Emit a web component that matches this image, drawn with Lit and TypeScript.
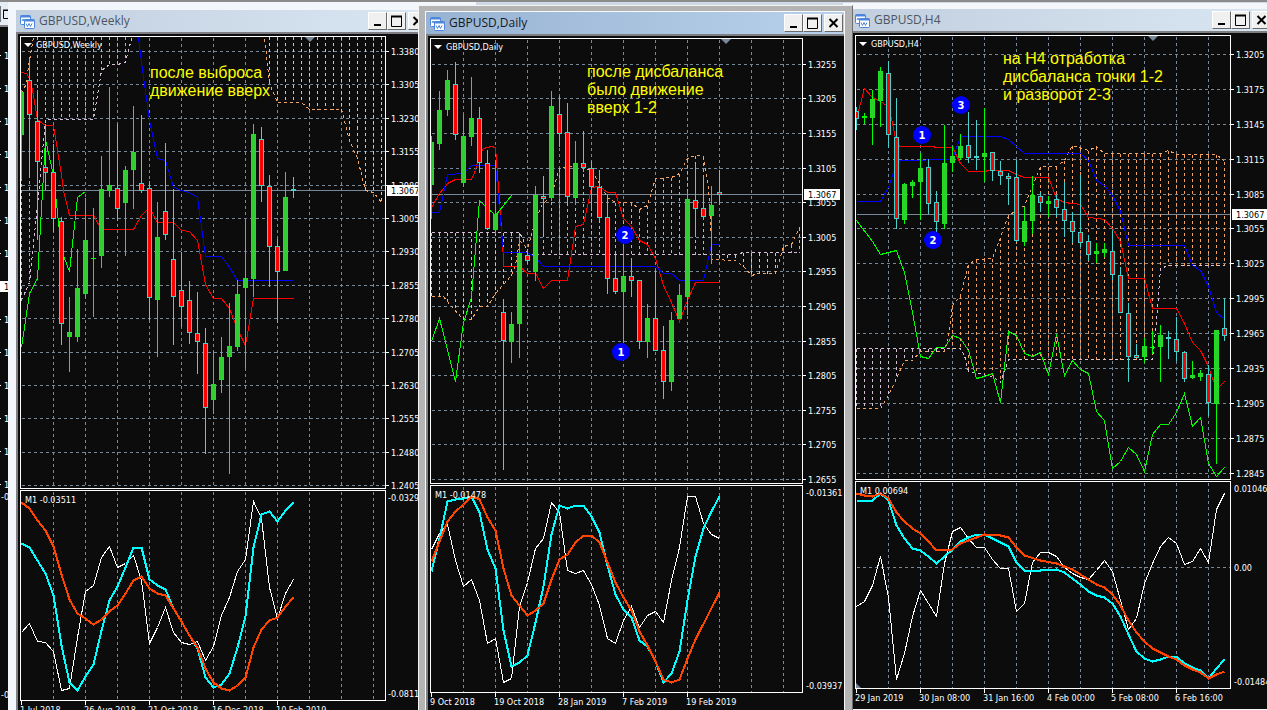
import { LitElement, html, svg, css, nothing } from "lit";
import { customElement, property } from "lit/decorators.js";

type Candle = [kind: "g" | "r", top: number, bottom: number, high: number, low: number];
type Label = [y: number, text: string];

interface Chart {
  title: string;
  active: boolean;
  place: string;
  originX: number;
  originY: number;
  box: { left: number; right: number; top: number; bottom: number; subTop: number; subBottom: number };
  caption: { x: number; y: number };
  first: number;
  gridX: number;
  axisX: number;
  prices: Label[];
  price: number;
  subLabels: Label[];
  subAxisX: number;
  zero?: number;
  momentum: { x: number; y: number; text: string };
  dates: string[];
  dateX: number;
  dateY: number;
  marker: number;
  candles: Candle[];
  red: string;
  blue: string;
  green: string;
  spanA: string;
  spanB: string;
  white: string;
  cyan: string;
  orange: string;
  note: { x: number; y: number; lines: string[] };
  pins: [number, number, string][];
}

const scale = (ys: number[], start: number, step: number): Label[] =>
  ys.map((y, i) => [y, ((start - i * step) / 10000).toFixed(4)]);

const weekly: Chart = {
  title: "GBPUSD,Weekly",
  active: false,
  place: "left:8px;top:3px;width:431px;padding:7px 8px 0",
  originX: 18,
  originY: 34,
  box: { left: 20, right: 385, top: 36, bottom: 488, subTop: 490, subBottom: 700 },
  caption: { x: 36, y: 48 },
  first: 21,
  gridX: 53,
  axisX: 391,
  prices: scale([51, 84, 118, 151, 185, 218, 251, 285, 318, 352, 385, 418, 452, 485], 13380, 75),
  price: 190,
  subLabels: [[501, "-0.0329"], [697, "-0.0811"]],
  subAxisX: 388,
  momentum: { x: 25, y: 503, text: "M1 -0.03511" },
  dates: ["1 Jul 2018", "26 Aug 2018", "21 Oct 2018", "16 Dec 2018", "10 Feb 2019"],
  dateX: 20,
  dateY: 713,
  marker: 310,
  candles: [
    ["g", 92, 135, 90, 179], ["r", 80, 115, 58, 177], ["r", 121, 162, 90, 240], ["r", 167, 173, 124, 190],
    ["r", 172, 219, 144, 232], ["r", 221, 324, 217, 345], ["g", 332, 337, 297, 372], ["g", 288, 337, 249, 342],
    ["g", 240, 294, 198, 298], ["g", 258, 259, 208, 317], ["g", 189, 256, 156, 268], ["g", 185, 191, 87, 197],
    ["r", 188, 209, 124, 221], ["g", 170, 203, 166, 256], ["g", 152, 170, 106, 209], ["r", 183, 191, 115, 193],
    ["r", 188, 298, 181, 320], ["g", 237, 300, 202, 357], ["r", 211, 235, 143, 240], ["r", 259, 297, 189, 345],
    ["r", 290, 307, 252, 327], ["r", 300, 333, 281, 344], ["r", 333, 342, 292, 374], ["r", 343, 408, 328, 454],
    ["g", 384, 400, 351, 414], ["g", 357, 380, 337, 393], ["g", 346, 357, 303, 474], ["g", 294, 347, 280, 351],
    ["g", 278, 288, 220, 368], ["g", 134, 279, 124, 297], ["r", 139, 186, 127, 202], ["r", 186, 247, 175, 287],
    ["r", 246, 272, 239, 323], ["g", 197, 271, 172, 271], ["r", 189, 191, 177, 198],
  ],
  red: "21,72 26,73 29,78 32,90 37,119 42,123 45,125 53,125 61,175 63,190 69,215 93,215 101,229 133,229 141,215 149,207 157,222 173,222 181,230 189,231 197,240 205,284 213,298 221,298 229,308 237,329 245,345 253,298 293,298",
  blue: "138,37 141,62 149,120 157,158 165,160 173,187 181,190 189,192 197,197 205,256 221,256 229,267 237,280 293,280",
  green: "21,347 29,293 37,278 45,139 53,175 61,250 69,271 77,197 85,191",
  spanA: "21,93 25,85 29,60 33,37 37,20 261,20 264,37 269,83 277,102 301,102 309,109 341,109 349,140 357,158 365,190 373,192 381,202",
  spanB: "21,300 29,282 37,205 45,119 93,119 101,70 109,64 117,64 125,62 131,38 137,20 381,20",
  white: "21,632 29,623 37,641 45,642 53,651 61,690 69,688 77,637 85,591 93,585 101,557 109,546 117,567 125,563 133,555 141,580 149,643 157,627 165,607 173,632 181,642 189,644 197,641 205,660 213,646 221,615 229,597 237,571 245,559 253,501 261,518 269,587 277,618 285,593 293,579",
  cyan: "21,543 29,547 37,560 45,573 53,595 61,645 69,682 77,690 85,676 93,664 101,630 109,600 117,586 125,567 133,547 141,547 149,579 157,585 165,589 173,608 181,621 189,635 197,648 205,677 213,687 221,684 229,673 237,647 245,616 253,547 261,514 269,511 277,521 285,510 293,502",
  orange: "21,502 29,508 37,520 45,530 53,546 61,574 69,599 77,613 85,618 93,624 101,619 109,611 117,605 125,593 133,580 141,576 149,588 157,593 165,595 173,608 181,621 189,635 197,647 205,668 213,682 221,688 229,690 237,685 245,677 253,647 261,629 269,620 277,617 285,606 293,597",
  note: { x: 150, y: 78, lines: ["после выброса", "движение вверх"] },
  pins: [],
};

const daily: Chart = {
  title: "GBPUSD,Daily",
  active: true,
  place: "left:418px;top:5px;width:435px;padding:5px 7px 0 6px",
  originX: 428,
  originY: 36,
  box: { left: 430, right: 802, top: 38, bottom: 483, subTop: 485, subBottom: 692 },
  caption: { x: 446, y: 50 },
  first: 431,
  gridX: 463,
  axisX: 808,
  prices: scale([64, 98, 133, 168, 202, 237, 271, 306, 341, 375, 410, 444, 479], 13255, 50),
  price: 194,
  subLabels: [[496, "-0.01361"], [689, "-0.03937"]],
  subAxisX: 806,
  momentum: { x: 435, y: 498, text: "M1 -0.01478" },
  dates: ["9 Oct 2018", "19 Oct 2018", "28 Jan 2019", "7 Feb 2019", "19 Feb 2019"],
  dateX: 430,
  dateY: 705,
  marker: 726,
  candles: [
    ["g", 142, 185, 136, 219], ["g", 110, 144, 91, 150], ["g", 80, 110, 70, 116], ["r", 84, 135, 62, 140],
    ["g", 136, 183, 115, 187], ["g", 118, 137, 77, 146], ["r", 118, 163, 107, 173], ["r", 163, 229, 150, 230],
    ["g", 214, 230, 162, 234], ["r", 312, 341, 299, 470], ["g", 324, 342, 312, 363], ["g", 253, 324, 235, 358],
    ["r", 255, 261, 250, 264], ["g", 195, 272, 186, 281], ["r", 196, 199, 176, 234], ["g", 106, 198, 91, 201],
    ["r", 114, 134, 96, 147], ["r", 132, 197, 103, 203], ["g", 163, 198, 141, 205], ["r", 163, 168, 131, 172],
    ["r", 168, 187, 161, 211], ["r", 187, 218, 170, 221], ["r", 217, 279, 195, 294], ["r", 278, 292, 255, 294],
    ["g", 276, 292, 244, 343], ["r", 276, 281, 258, 297], ["r", 280, 342, 280, 349], ["g", 318, 342, 304, 358],
    ["r", 318, 351, 270, 351], ["r", 350, 382, 326, 399], ["g", 320, 382, 312, 391], ["g", 295, 319, 284, 319],
    ["g", 199, 297, 191, 315], ["r", 200, 209, 165, 236], ["r", 208, 217, 176, 220], ["g", 205, 216, 186, 264],
    ["r", 192, 195, 170, 205],
  ],
  red: "431,207 439,193 447,183 455,179 471,179 475,170 479,153 483,148 491,146 495,147 499,200 503,258 503,266 519,266 527,273 535,273 543,288 551,280 567,280 573,240 575,226 583,224 591,187 599,186 607,192 615,192 623,218 631,226 639,240 647,244 655,258 663,285 671,302 679,321 687,300 695,282 719,282",
  blue: "431,212 439,212 447,174 463,173 471,165 495,165 503,252 527,252 535,257 543,266 655,266 663,273 671,273 679,280 703,280 711,244 719,244",
  green: "431,341 439,318 455,381 463,322 471,297 479,200 495,215 511,195",
  spanA: "431,296 443,296 451,306 463,319 471,319 479,306 487,306 495,293 503,284 511,275 515,265 519,240 527,248 535,220 541,205 551,195 559,168 575,165 591,170 607,197 615,202 631,202 639,209 647,205 655,178 671,177 679,173 687,158 695,155 703,156 708,185 711,240 711,259 735,260 743,266 751,275 759,273 775,273 783,246 791,244 799,227",
  spanB: "431,232 519,232 523,240 527,254 735,254 743,252 799,252",
  white: "431,549 439,533 447,524 455,560 463,586 471,579 479,600 487,643 495,638 503,682 511,678 519,606 527,582 535,548 543,538 551,502 559,512 567,570 575,573 583,570 591,584 599,605 607,638 615,643 623,620 631,606 639,627 647,615 655,611 663,622 671,580 679,547 687,496 695,496 703,523 711,534 719,538",
  cyan: "431,571 439,538 447,501 455,499 463,498 471,496 479,512 487,549 495,568 503,630 511,666 519,662 527,655 535,622 543,586 551,534 559,505 567,508 575,505 583,505 591,516 599,532 607,565 615,594 623,609 631,617 639,640 647,646 655,661 663,682 671,673 679,651 687,600 695,556 703,528 711,511 719,496",
  orange: "431,561 439,541 447,521 455,511 463,504 471,496 479,499 487,517 495,530 503,568 511,595 519,605 527,615 535,610 543,603 551,579 559,559 567,554 575,542 583,535 591,535 599,542 607,562 615,582 623,597 631,610 639,631 647,645 655,661 663,679 671,682 679,679 687,658 695,639 719,592",
  note: { x: 587, y: 77, lines: ["после дисбаланса", "было движение", "вверх 1-2"] },
  pins: [[625, 235, "2"], [621, 352, "1"]],
};

const h4: Chart = {
  title: "GBPUSD,H4",
  active: false,
  place: "left:843px;top:3px;width:432px;padding:6px 0 1px 8px",
  originX: 853,
  originY: 33,
  box: { left: 855, right: 1230, top: 35, bottom: 479, subTop: 481, subBottom: 688 },
  caption: { x: 871, y: 47 },
  first: 856,
  gridX: 888,
  axisX: 1236,
  prices: scale([54, 89, 124, 159, 194, 228, 263, 298, 333, 368, 403, 438, 473], 13205, 30),
  price: 214,
  subLabels: [[492, "0.01046"], [571, "0.00"], [685, "-0.01484"]],
  subAxisX: 1234,
  zero: 567,
  momentum: { x: 860, y: 494, text: "M1 0.00694" },
  dates: ["29 Jan 2019", "30 Jan 08:00", "31 Jan 16:00", "4 Feb 00:00", "5 Feb 08:00", "6 Feb 16:00"],
  dateX: 855,
  dateY: 701,
  marker: 1153,
  candles: [
    ["r", 111, 119, 107, 130], ["g", 116, 118, 113, 124], ["g", 99, 118, 90, 145], ["g", 71, 101, 67, 127],
    ["r", 73, 135, 61, 148], ["r", 137, 219, 98, 229], ["g", 184, 220, 183, 224], ["g", 182, 186, 180, 198],
    ["g", 168, 182, 153, 220], ["r", 167, 204, 159, 214], ["r", 202, 222, 191, 232], ["g", 163, 224, 125, 229],
    ["g", 156, 163, 146, 172], ["g", 146, 158, 134, 160], ["r", 145, 158, 112, 163], ["r", 156, 158, 120, 170],
    ["g", 153, 157, 108, 182], ["r", 152, 171, 152, 181], ["r", 171, 176, 161, 185], ["r", 176, 179, 173, 205],
    ["r", 177, 241, 160, 242], ["g", 221, 242, 207, 246], ["g", 195, 221, 176, 234], ["r", 196, 203, 192, 212],
    ["g", 201, 204, 196, 217], ["r", 199, 208, 195, 217], ["r", 209, 221, 182, 237], ["r", 221, 232, 212, 243],
    ["r", 232, 243, 175, 247], ["r", 241, 255, 235, 261], ["g", 251, 254, 243, 263], ["g", 249, 253, 243, 257],
    ["r", 251, 275, 231, 280], ["r", 275, 313, 267, 313], ["r", 313, 357, 303, 382], ["r", 355, 358, 344, 358],
    ["g", 346, 357, 338, 363], ["g", 347, 348, 331, 354], ["g", 335, 347, 325, 382], ["r", 337, 339, 331, 359],
    ["r", 339, 352, 317, 361], ["r", 352, 379, 351, 382], ["g", 375, 378, 361, 379], ["g", 373, 377, 370, 381],
    ["r", 374, 403, 365, 416], ["g", 330, 404, 330, 464], ["r", 328, 336, 298, 341],
  ],
  red: "856,118 864,88 872,97 880,101 886,105 891,118 895,138 899,146 932,146 936,147 952,147 960,163 968,171 984,171 988,170 1008,170 1016,174 1024,177 1048,177 1056,198 1064,202 1080,204 1088,217 1104,219 1112,228 1120,241 1128,278 1144,278 1152,308 1176,308 1184,323 1192,342 1200,350 1208,366 1216,389 1224,381",
  blue: "856,201 880,201 888,187 894,169 900,160 952,159 960,136 1000,136 1008,139 1024,153 1080,153 1088,160 1096,180 1104,185 1112,195 1120,211 1128,245 1184,245 1192,265 1200,270 1208,286 1216,312 1224,319",
  green: "856,220 872,241 880,254 896,250 904,272 912,312 920,356 928,358 936,347 944,347 952,335 960,338 968,350 976,378 984,376 992,373 1000,402 1008,331 1016,335 1024,353 1032,356 1040,352 1048,374 1056,334 1064,375 1072,360 1080,369 1088,373 1096,411 1104,420 1112,468 1120,461 1128,447 1136,454 1144,471 1152,434 1160,424 1168,424 1176,412 1184,393 1192,426 1200,417 1208,463 1216,476 1224,467",
  spanA: "856,408 880,408 888,395 896,378 904,360 912,360 920,351 944,351 948,335 952,305 960,295 968,264 976,259 992,258 1000,237 1008,215 1024,205 1040,166 1056,166 1064,160 1072,145 1088,150 1096,146 1104,153 1160,153 1168,150 1176,154 1216,154 1224,161",
  spanB: "856,348 960,348 964,355 968,371 992,376 1000,382 1008,359 1152,359 1156,320 1160,268 1168,265 1224,265",
  white: "856,606 864,601 872,585 880,556 888,597 896,679 904,653 912,616 920,590 928,603 936,616 944,563 952,531 960,527 968,538 976,547 984,547 992,559 1000,568 1008,568 1016,611 1024,603 1032,562 1040,552 1048,552 1056,556 1064,567 1072,573 1080,577 1088,579 1096,570 1104,560 1112,571 1120,600 1128,629 1136,618 1144,583 1152,563 1160,546 1168,537 1176,543 1184,564 1192,561 1200,548 1208,562 1216,509 1224,493",
  cyan: "856,500 872,500 880,493 888,500 896,525 904,538 912,548 920,550 928,556 936,563 944,556 952,549 960,541 968,537 976,534 984,534 992,538 1008,546 1016,562 1024,570 1040,570 1056,569 1064,572 1080,584 1088,591 1096,595 1104,597 1112,603 1120,616 1128,634 1136,651 1144,658 1152,661 1160,659 1168,656 1176,656 1184,663 1192,667 1200,670 1208,678 1216,668 1224,659",
  orange: "856,493 864,495 872,496 880,493 888,498 896,512 904,521 912,528 920,533 928,541 936,550 952,549 960,543 984,534 1000,535 1008,537 1016,547 1024,555 1040,560 1056,563 1072,569 1096,584 1104,587 1112,594 1120,605 1128,620 1136,632 1144,641 1152,648 1168,656 1176,659 1184,665 1192,669 1200,672 1208,678 1216,674 1224,671",
  note: { x: 1003, y: 64, lines: ["на H4 отработка", "дисбаланса точки 1-2", "и разворот 2-3"] },
  pins: [[922, 135, "1"], [933, 240, "2"], [961, 105, "3"]],
};

const parse = (points: string) => points.split(" ").map((p) => p.split(",").map(Number));

/** Height of a polyline at x, interpolated between its vertices. */
const levelAt = (points: number[][], x: number): number => {
  for (let i = 1; i < points.length; i++) {
    const [x0, y0] = points[i - 1];
    const [x1, y1] = points[i];
    if (x >= x0 && x <= x1 && x1 > x0) return y0 + ((y1 - y0) * (x - x0)) / (x1 - x0);
  }
  return points[points.length - 1][1];
};

@customElement("price-chart")
class PriceChart extends LitElement {
  @property({ attribute: false }) chart!: Chart;

  static styles = css`
    :host { display: block; flex: 1; min-height: 0; overflow: hidden; background: #0c0c0c; }
    svg { display: block; width: 100%; height: 100%; }
    text { font: 9px "DejaVu Sans Condensed", "Noto Sans", sans-serif; fill: #fff; }
    .note { font: 16px "Liberation Sans", sans-serif; fill: #ff0; }
    .pin { font: bold 10px "DejaVu Sans", sans-serif; text-anchor: middle; }
    .disc { fill: #00f; }
    .crisp { shape-rendering: crispEdges; fill: none; }
    .frame, .tick { stroke: #fff; }
    .grid { stroke: #778899; stroke-dasharray: 3 3; }
    .level { stroke: #778899; }
    .peach { stroke: #f4a460; stroke-dasharray: 3 3; }
    .thistle { stroke: #d8bfd8; stroke-dasharray: 3 3; }
    .red { stroke: #f00; }
    .blue { stroke: #00f; }
    .lime { stroke: #0f0; }
    .white { stroke: #fff; }
    .cyan { stroke: #0ff; stroke-width: 2; }
    .orange { stroke: #ff4500; stroke-width: 2; }
    .wickg { fill: #0f0; }
    .wickr { fill: #48d1cc; }
    .bodyg { fill: #32cd32; stroke: #1ee01e; }
    .bodyr { fill: #f00; stroke: #48d1cc; }
    .marker { fill: #778899; }
    .arrow, .tag { fill: #fff; }
    .now { fill: #000; }
  `;

  private cloud(c: Chart) {
    const a = parse(c.spanA);
    const b = parse(c.spanB);
    const end = a[a.length - 1][0];
    const lines = [];
    for (let x = c.first; x <= end; x += 8) {
      const ya = levelAt(a, x);
      const yb = levelAt(b, x);
      if (Math.abs(ya - yb) < 3) continue;
      lines.push(svg`<line class=${ya < yb ? "peach" : "thistle"} x1=${x} x2=${x}
        y1=${Math.max(c.box.top, Math.min(ya, yb))} y2=${Math.max(ya, yb)} />`);
    }
    return lines;
  }

  render() {
    const c = this.chart;
    const b = c.box;
    const columns = Array.from({ length: 11 }, (_, i) => c.gridX + i * 32);
    const clip = `plot-${c.first}`;
    return html`<svg role="img" aria-label=${c.title}>
      <g transform="translate(${-c.originX} ${-c.originY})">
        <clipPath id=${clip}>
          <rect x=${b.left} y=${b.top} width=${b.right - b.left} height=${b.bottom - b.top} />
        </clipPath>
        <g class="crisp" transform="translate(0.5 0.5)">
          ${columns.map((x) => svg`
            <line class="grid" x1=${x} x2=${x} y1=${b.top + 1} y2=${b.bottom} />
            <line class="grid" x1=${x} x2=${x} y1=${b.subTop + 1} y2=${b.subBottom} />`)}
          ${c.prices.map(([y]) => svg`<line class="grid" x1=${b.left + 1} x2=${b.right} y1=${y} y2=${y} />`)}
          ${c.zero ? svg`<line class="grid" x1=${b.left + 1} x2=${b.right} y1=${c.zero} y2=${c.zero} />` : nothing}
          <line class="level" x1=${b.left + 1} x2=${b.right} y1=${c.price} y2=${c.price} />
        </g>
        <g clip-path="url(#${clip})">
          <g class="crisp" transform="translate(0.5 0.5)">
            ${this.cloud(c)}
            <polyline class="thistle" points=${c.spanB} />
            <polyline class="peach" points=${c.spanA} />
            <polyline class="red" points=${c.red} />
            <polyline class="blue" points=${c.blue} />
            <polyline class="lime" points=${c.green} />
          </g>
          <g shape-rendering="crispEdges">
            ${c.candles.map(([kind, top, bottom, high, low], i) => {
              const x = c.first + i * 8;
              return svg`<rect class="wick${kind}" x=${x} y=${high} width="1" height=${low - high} />
                ${bottom - top < 3
                  ? svg`<rect class="wick${kind}" x=${x - 2} y=${top} width="5" height=${bottom - top} />`
                  : svg`<rect class="body${kind}" x=${x - 1.5} y=${top + 0.5} width="4" height=${bottom - top - 1} />`}`;
            })}
          </g>
        </g>
        <g class="crisp" transform="translate(0.5 0.5)">
          <polyline class="white" points=${c.white} />
          <polyline class="cyan" points=${c.cyan} />
          <polyline class="orange" points=${c.orange} />
          <rect class="frame" x=${b.left} y=${b.top} width=${b.right - b.left} height=${b.bottom - b.top} />
          <rect class="frame" x=${b.left} y=${b.subTop} width=${b.right - b.left} height=${b.subBottom - b.subTop} />
          ${c.prices.map(([y]) => svg`<line class="tick" x1=${b.right} x2=${b.right + 3} y1=${y} y2=${y} />`)}
          ${c.dates.map((_, i) => {
            const x = c.first + i * 64;
            return svg`<line class="tick" x1=${x} x2=${x} y1=${b.subBottom} y2=${b.subBottom + 4} />`;
          })}
        </g>
        <path class="marker" d="M${c.marker - 5} ${b.top + 1}h10l-5 5z" />
        ${c.zero ? svg`<path class="marker" d="M${b.left + 1} ${b.subBottom - 5}l5 5h-5z" />` : nothing}
        <path class="arrow" d="M${c.caption.x - 12} ${c.caption.y - 5}h8l-4 4z" />
        <text x=${c.caption.x} y=${c.caption.y}>${c.title}</text>
        ${c.prices.map(([y, text]) => svg`<text x=${c.axisX} y=${y + 4}>${text}</text>`)}
        <rect class="tag" x=${b.right + 2} y=${c.price - 5} width="36" height="11" />
        <text class="now" x=${c.axisX} y=${c.price + 4}>1.3067</text>
        ${c.subLabels.map(([y, text]) => svg`<text x=${c.subAxisX} y=${y}>${text}</text>`)}
        ${c.dates.map((text, i) => svg`<text x=${c.dateX + i * 64} y=${c.dateY}>${text}</text>`)}
        <text x=${c.momentum.x} y=${c.momentum.y}>${c.momentum.text}</text>
        ${c.note.lines.map((text, i) => svg`<text class="note" x=${c.note.x} y=${c.note.y + i * 18}>${text}</text>`)}
        ${c.pins.map(([x, y, text]) => svg`
          <circle class="disc" cx=${x} cy=${y} r="9" />
          <text class="pin" x=${x} y=${y + 4}>${text}</text>`)}
      </g>
    </svg>`;
  }
}

@customElement("chart-window")
class ChartWindow extends LitElement {
  @property({ attribute: false }) chart!: Chart;

  static styles = css`
    :host { position: absolute; bottom: 0; box-sizing: border-box; display: flex; background: #f3f6fb; }
    :host([active]) { background: #b4b4b4; border: solid; border-width: 1px 1px 0; border-color: #f4f4f4 #6e6e6e #6e6e6e #f4f4f4; }
    .inner { flex: 1; min-width: 0; display: flex; flex-direction: column; }
    .inner.active { border: solid #f8f8f8; border-width: 1px 1px 0; }
    .bar { display: flex; align-items: center; height: 22px; box-sizing: border-box; padding-left: 4px; background: linear-gradient(90deg, #c2cfdf, #d9e6f2); }
    .active .bar { background: linear-gradient(90deg, #98b3d3, #b9d1ea); }
    .icon { width: 15px; height: 15px; flex: none; }
    .title { flex: 1; margin: 0 0 0 4px; font: 12px/18px "Open Sans", "Noto Sans", sans-serif; color: #4b5663; white-space: nowrap; }
    .active .title { color: #16191d; }
    .controls { display: flex; padding-right: 4px; }
    .active .controls { padding-right: 1px; }
    button { width: 19px; height: 18px; padding: 0; box-sizing: border-box; background: #f0f0f0; border: 1px solid; border-color: #fff #696969 #696969 #fff; display: grid; place-items: center; }
    button:last-child { margin-left: 2px; }
    button svg { width: 13px; height: 12px; display: block; fill: none; stroke: #000; }
    .body { flex: 1; min-height: 0; display: flex; border: solid #7d7f82; border-width: 2px 0 0 2px; }
  `;

  render() {
    const state = this.chart.active ? "active" : "inactive";
    return html`<div class="inner ${state}">
      <header class="bar">
        <svg class="icon" viewBox="0 0 15 15" fill="#fff" stroke="#4b86dc">
          <rect x="0.5" y="1.5" width="10" height="9" rx="1" />
          <path d="M0.5 2.5h10" stroke-width="2" />
          <path d="M2 7l1-2 1 2 1-2" fill="none" />
          <rect x="4.5" y="5.5" width="10" height="9" rx="1" />
          <path d="M4.5 6.5h10" stroke-width="2" />
          <path d="M6 9.5l1.5 3 1.5-3 1.5 3 1.5-3" fill="none" />
        </svg>
        <h2 class="title">${this.chart.title}</h2>
        <div class="controls">
          <button aria-label="Minimize"><svg viewBox="0 0 13 12"><path d="M3 10h7" stroke-width="2" /></svg></button>
          <button aria-label="Maximize"><svg viewBox="0 0 13 12"><path d="M1.5 1v10.5h10v-10.5" /><path d="M1 1.5h11" stroke-width="2" /></svg></button>
          <button aria-label="Close"><svg viewBox="0 0 13 12"><path d="M2.5 2l8 8M10.5 2l-8 8" stroke-width="2" /></svg></button>
        </div>
      </header>
      <div class="body"><price-chart .chart=${this.chart}></price-chart></div>
    </div>`;
  }
}

@customElement("app-root")
class AppRoot extends LitElement {
  static styles = css`
    :host { display: block; position: relative; height: 100vh; overflow: hidden; box-sizing: border-box; background: #f3f6fb; border-top: 2px solid #8b8b8b; }
    .strip { height: 3px; margin-left: 476px; background: #cfdae6; }
    .behind { position: absolute; left: 0; top: 0; bottom: 0; width: 8px; overflow: hidden; display: flex; flex-direction: column; }
    .cap { height: 25px; background: #e6edf5; border-bottom: 2px solid #85878a; box-sizing: border-box; flex: none; }
    .behind svg { display: block; width: 8px; flex: 1; background: #0c0c0c; }
    .cap svg { background: none; height: 22px; }
    text { font: 9px "DejaVu Sans Condensed", "Noto Sans", sans-serif; fill: #fff; }
    .dark { fill: #000; }
    .tick { fill: #fff; }
  `;

  render() {
    const rows = [55, 88, 121, 154, 187, 220, 253, 319, 352, 385, 418, 451, 484];
    return html`
      <div class="strip"></div>
      <div class="behind">
        <div class="cap"><svg viewBox="0 0 8 22"><path d="M0 4v16M8 8.5H3.5v8H8M3 8h5" fill="none" stroke="#000" /></svg></div>
        <svg>
          <g transform="translate(0 -27)">
            ${rows.map((y) => svg`<rect class="tick" x="0" y=${y} width="1" height="1" /><text x="4" y=${y + 4}>1</text>`)}
            <rect class="tick" x="0" y="281" width="8" height="11" />
            <text class="dark" x="4" y="290">1</text>
            <text x="1" y="500">-0</text>
            <text x="1" y="698">-0</text>
          </g>
        </svg>
      </div>
      ${[weekly, h4, daily].map((c) => html`
        <chart-window style="${c.place};margin-top:-2px" ?active=${c.active} .chart=${c}></chart-window>`)}
    `;
  }
}
